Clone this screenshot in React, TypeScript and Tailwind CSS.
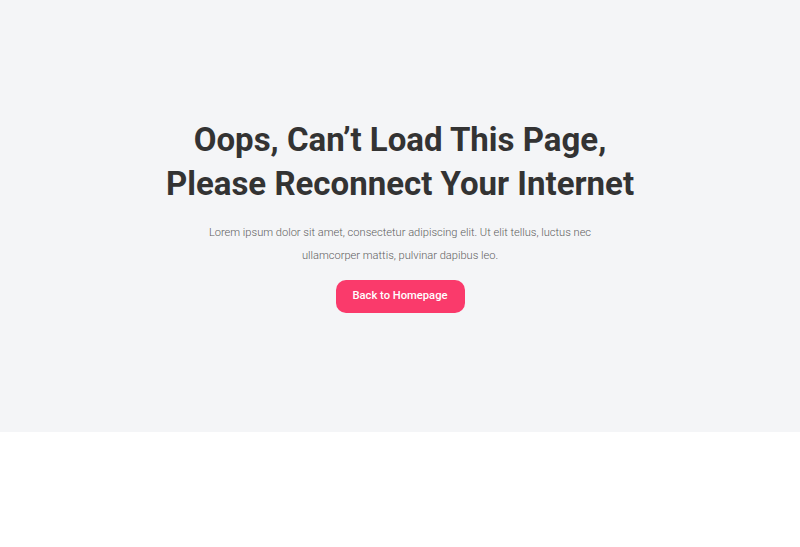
export default function App() {
  return (
    <div className="min-h-[547px] bg-white font-['Roboto',sans-serif]">
      <section className="h-[432px] bg-[#f4f5f7] flex flex-col items-center pt-[118px]">
        <h1 className="text-center text-[33px] leading-[44px] font-bold text-[#333333]">
          Oops, Can’t Load This Page,
          <br />
          Please Reconnect Your Internet
        </h1>
        <p className="mt-[15px] w-[400px] text-center text-[11.1px] leading-[23px] font-light text-[#5f5f5f]">
          Lorem ipsum dolor sit amet, consectetur adipiscing elit. Ut elit tellus, luctus nec ullamcorper mattis, pulvinar dapibus leo.
        </p>
        <button className="mt-[13px] h-[33px] w-[129px] rounded-[10px] bg-[#fa3a6b] text-[11.2px] font-medium text-white">
          Back to Homepage
        </button>
      </section>
    </div>
  );
}
